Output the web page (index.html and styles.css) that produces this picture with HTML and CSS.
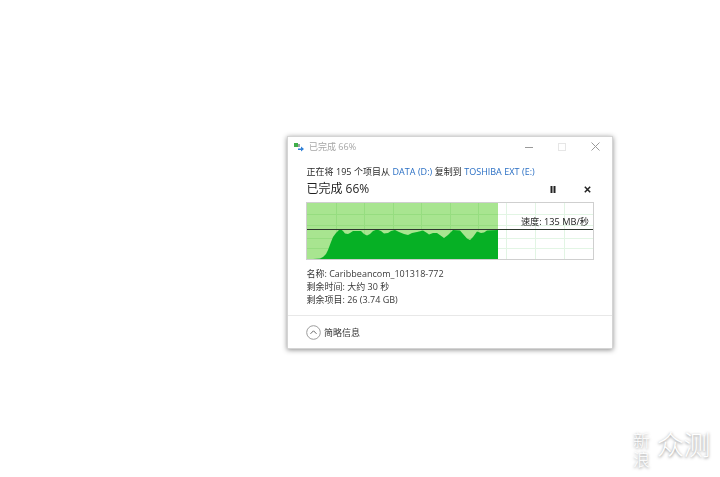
FILE: index.html
```html
<!DOCTYPE html>
<html lang="zh-CN">
<head>
<meta charset="utf-8">
<title>已完成 66%</title>
<link rel="stylesheet" href="styles.css">
</head>
<body>
<div class="window">
  <div class="titlebar">
    <svg class="app-icon" width="10" height="9" viewBox="0 0 10 9">
      <rect x="0" y="0" width="4" height="4" fill="#3fae49"/>
      <rect x="4" y="1" width="2" height="3" fill="#9aa3a8"/>
      <path d="M4 5.500h3V3.500L10 6 7 8.500V7H4z" fill="#2f7fd6"/>
    </svg>
    <span class="title-text">已完成 66%</span>
    <div class="controls">
      <svg width="8" height="8" viewBox="0 0 8 8"><path d="M0 4.500h8" stroke="#9a9a9a" fill="none"/></svg>
      <svg width="8" height="8" viewBox="0 0 8 8"><rect x="0.500" y="0.500" width="7" height="7" stroke="#e6e6e6" fill="none"/></svg>
      <svg width="9" height="9" viewBox="0 0 9 9"><path d="M0.500 0.500l8 8M8.500 0.500l-8 8" stroke="#9a9a9a" fill="none"/></svg>
    </div>
  </div>
  <div class="body">
    <div class="copy-line">正在将 195 个项目从 <span class="link">DATA (D:)</span> 复制到 <span class="link">TOSHIBA EXT (E:)</span></div>
    <div class="progress-head">
      <span class="progress-title">已完成 66%</span>
      <div class="progress-actions">
        <svg width="6" height="7" viewBox="0 0 6 7"><path d="M0.500 0h2v7h-2zM3.500 0h2v7h-2z" fill="#222"/></svg>
        <svg width="7" height="7" viewBox="0 0 7 7"><path d="M0.800 0.800l5.400 5.400M6.200 0.800l-5.400 5.400" stroke="#222" stroke-width="1.500" fill="none"/></svg>
      </div>
    </div>
    <div class="chart">
      <svg class="chart-svg" width="286" height="56" viewBox="0 0 286 56">
        <rect x="0" y="0" width="191" height="56" fill="#a8e590"/>
        <g stroke="#e2f5e4" fill="none">
          <path d="M0 11.500H286M0 22.500H286M0 35.500H286M0 45.500H286"/>
          <path d="M29.500 0V56M57.500 0V56M86.500 0V56M114.500 0V56M143.500 0V56M171.500 0V56M199.500 0V56M228.500 0V56M257.500 0V56"/>
        </g>
        <g stroke="#96dd80" fill="none">
          <path d="M0 11.500H191M0 22.500H191M0 35.500H191M0 45.500H191"/>
          <path d="M29.500 0V56M57.500 0V56M86.500 0V56M114.500 0V56M143.500 0V56M171.500 0V56"/>
        </g>
        <path fill="#06b025" d="M6 56L13 55.500 16 54 19 51 21 47 24 39 26 34 29 30 32 27 34 26.500 36 28 38 30.500 41 31 43 30 46 28 54 28 57 31 60 32.500 63 31 66 28 70 26.500 74 28 77 30.500 81 30 84 28 88 27 92 29 97 31 101 32 105 30 110 29 116 27.500 120 30 122 31.500 126 30 130 30 135 33.500 137 35 141 32 146 27 153 27.500 156 31 160 35.500 163 37 166 34 170 28.500 174 30 177 29.500 180 27.500 191 27V56z"/>
        <path d="M0 26.500H286" stroke="#2e382e" stroke-width="1" fill="none"/>
      </svg>
      <span class="speed">速度: 135 MB/秒</span>
    </div>
    <div class="details">
      <div>名称: Caribbeancom_101318-772</div>
      <div>剩余时间: 大约 30 秒</div>
      <div>剩余项目: 26 (3.74 GB)</div>
    </div>
  </div>
  <div class="footer">
    <svg width="15" height="15" viewBox="0 0 15 15">
      <circle cx="7.500" cy="7.500" r="6.800" stroke="#9c9c9c" fill="#fff"/>
      <path d="M4.500 8.800l3-3 3 3" stroke="#666" fill="none"/>
    </svg>
    <span class="footer-text">简略信息</span>
  </div>
</div>
<div class="watermark">
  <div class="wm-small">新浪</div>
  <div class="wm-big">众测</div>
</div>
</body>
</html>
```
FILE: styles.css
```css
* { box-sizing: border-box; }
html, body { margin: 0; height: 100%; background: #fff; overflow: hidden; }
body {
  width: 720px;
  height: 477px;
  position: relative;
  font-family: "Open Sans", "Noto Sans CJK SC", sans-serif;
  color: #2a2a2a;
}
.window {
  position: absolute;
  left: 287px;
  top: 136px;
  width: 326px;
  height: 213px;
  background: #fff;
  border: 1px solid #d4d4d4;
  box-shadow: 0 1px 5px rgba(0, 0, 0, 0.45);
  display: flex;
  flex-direction: column;
  filter: blur(0.4px);
}
.titlebar {
  height: 19px;
  display: flex;
  align-items: center;
  padding-left: 6px;
  flex-shrink: 0;
}
.app-icon { margin-right: 5px; margin-top: 2px; }
.title-text { font-size: 9px; color: #a6a6a6; }
.controls {
  margin-left: auto;
  display: flex;
  align-items: center;
  gap: 25px;
  padding-right: 12px;
}
.body {
  flex: 1;
  padding: 9px 19px 0 18px;
  display: flex;
  flex-direction: column;
}
.copy-line { font-size: 9px; line-height: 14px; height: 14px; padding-left: 0.500px; word-spacing: 0.200px; }
.link { color: #2a6fc4; }
.progress-head {
  height: 18px;
  display: flex;
  align-items: center;
  justify-content: space-between;
}
.progress-title { font-size: 12px; color: #1f1f1f; padding-left: 0.500px; }
.progress-actions {
  display: flex;
  align-items: center;
  gap: 28px;
  padding-right: 2px;
  margin-top: 2px;
}
.chart {
  position: relative;
  width: 288px;
  height: 58px;
  margin-top: 5px;
  border: 1px solid #cfcfcf;
  background: #fff;
}
.chart-svg { display: block; }
.speed {
  position: absolute;
  right: 4px;
  top: 12px;
  font-size: 9.200px;
  line-height: 13px;
  color: #222;
}
.details {
  margin-top: 7px;
  padding-left: 0.500px;
  font-size: 9px;
  line-height: 13px;
  color: #3a3a3a;
}
.footer {
  height: 33px;
  border-top: 1px solid #e8e8e8;
  display: flex;
  align-items: center;
  padding-left: 18px;
  gap: 3px;
  flex-shrink: 0;
}
.footer-text { font-size: 9px; color: #333; }
.watermark {
  position: absolute;
  left: 632px;
  top: 429px;
  display: flex;
  gap: 6px;
  color: #fff;
  font-family: "Noto Sans CJK SC", sans-serif;
  font-weight: 300;
  text-shadow: 0 1px 3px rgba(0, 0, 0, 0.5);
}
.wm-small {
  writing-mode: vertical-rl;
  font-size: 17px;
  line-height: 19px;
  letter-spacing: 2px;
  margin-top: 3px;
}
.wm-big { font-size: 27px; line-height: 30px; letter-spacing: -0.500px; }
```
